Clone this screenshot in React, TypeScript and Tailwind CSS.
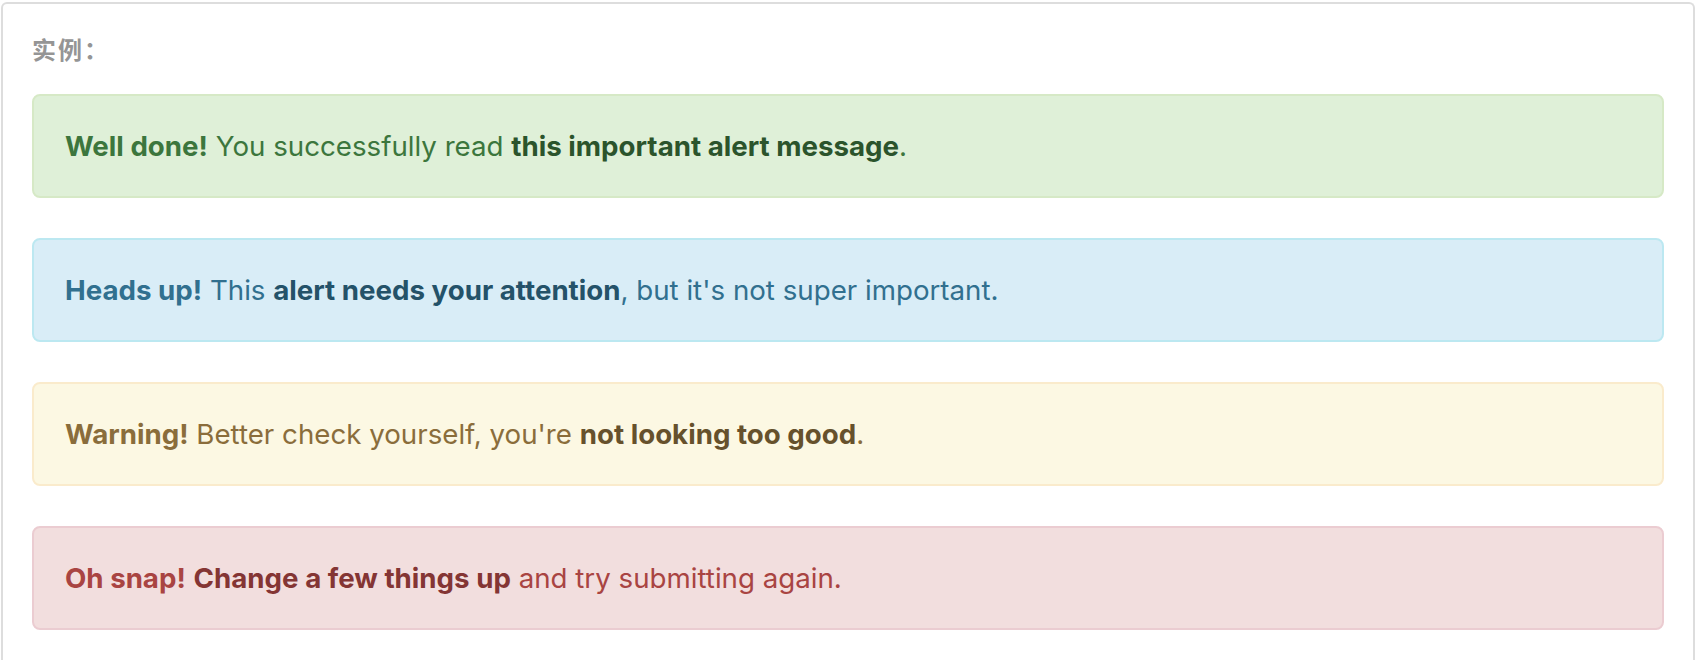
const ALERTS = [
  {
    box: "bg-[#dff0d8] border-[#d6e9c6] text-[#3c763d]",
    link: "text-[#2b542c]",
    parts: [
      { t: "Well done!", b: true },
      { t: " You successfully read " },
      { t: "this important alert message", link: true },
      { t: "." },
    ],
  },
  {
    box: "bg-[#d9edf7] border-[#bce8f1] text-[#31708f]",
    link: "text-[#245269]",
    parts: [
      { t: "Heads up!", b: true },
      { t: " This " },
      { t: "alert needs your attention", link: true },
      { t: ", but it's not super important." },
    ],
  },
  {
    box: "bg-[#fcf8e3] border-[#faebcc] text-[#8a6d3b]",
    link: "text-[#66512c]",
    parts: [
      { t: "Warning!", b: true },
      { t: " Better check yourself, you're " },
      { t: "not looking too good", link: true },
      { t: "." },
    ],
  },
  {
    box: "bg-[#f2dede] border-[#ebccd1] text-[#a94442]",
    link: "text-[#843534]",
    parts: [
      { t: "Oh snap!", b: true },
      { t: " " },
      { t: "Change a few things up", link: true },
      { t: " and try submitting again." },
    ],
  },
];

export default function App() {
  return (
    <div className="h-[660px] overflow-hidden bg-white pt-[2px] px-[1px] font-['Inter','Noto_Sans',sans-serif]">
      <div className="h-[658px] rounded-t-[6px] border-2 border-b-0 border-[#dddddd] px-[29px] pt-[29px]">
        {/* label */}
        <div className="mb-[29px] text-[24px] leading-[32px] font-bold tracking-[2px] text-[#959595] font-['Noto_Sans_CJK_SC',sans-serif]">
          实例：
        </div>

        {ALERTS.map((a, i) => (
          <div
            key={i}
            className={`rounded-[8px] border-2 py-[30px] pl-[31px] pr-[31px] text-[27.7px] leading-[40px] ${i < ALERTS.length - 1 ? "mb-[40px]" : ""} ${a.box}`}
          >
            {a.parts.map((p, j) =>
              p.b ? (
                <strong key={j} className="font-bold">{p.t}</strong>
              ) : p.link ? (
                <span key={j} className={`font-bold ${a.link}`}>{p.t}</span>
              ) : (
                <span key={j}>{p.t}</span>
              )
            )}
          </div>
        ))}
      </div>
    </div>
  );
}
